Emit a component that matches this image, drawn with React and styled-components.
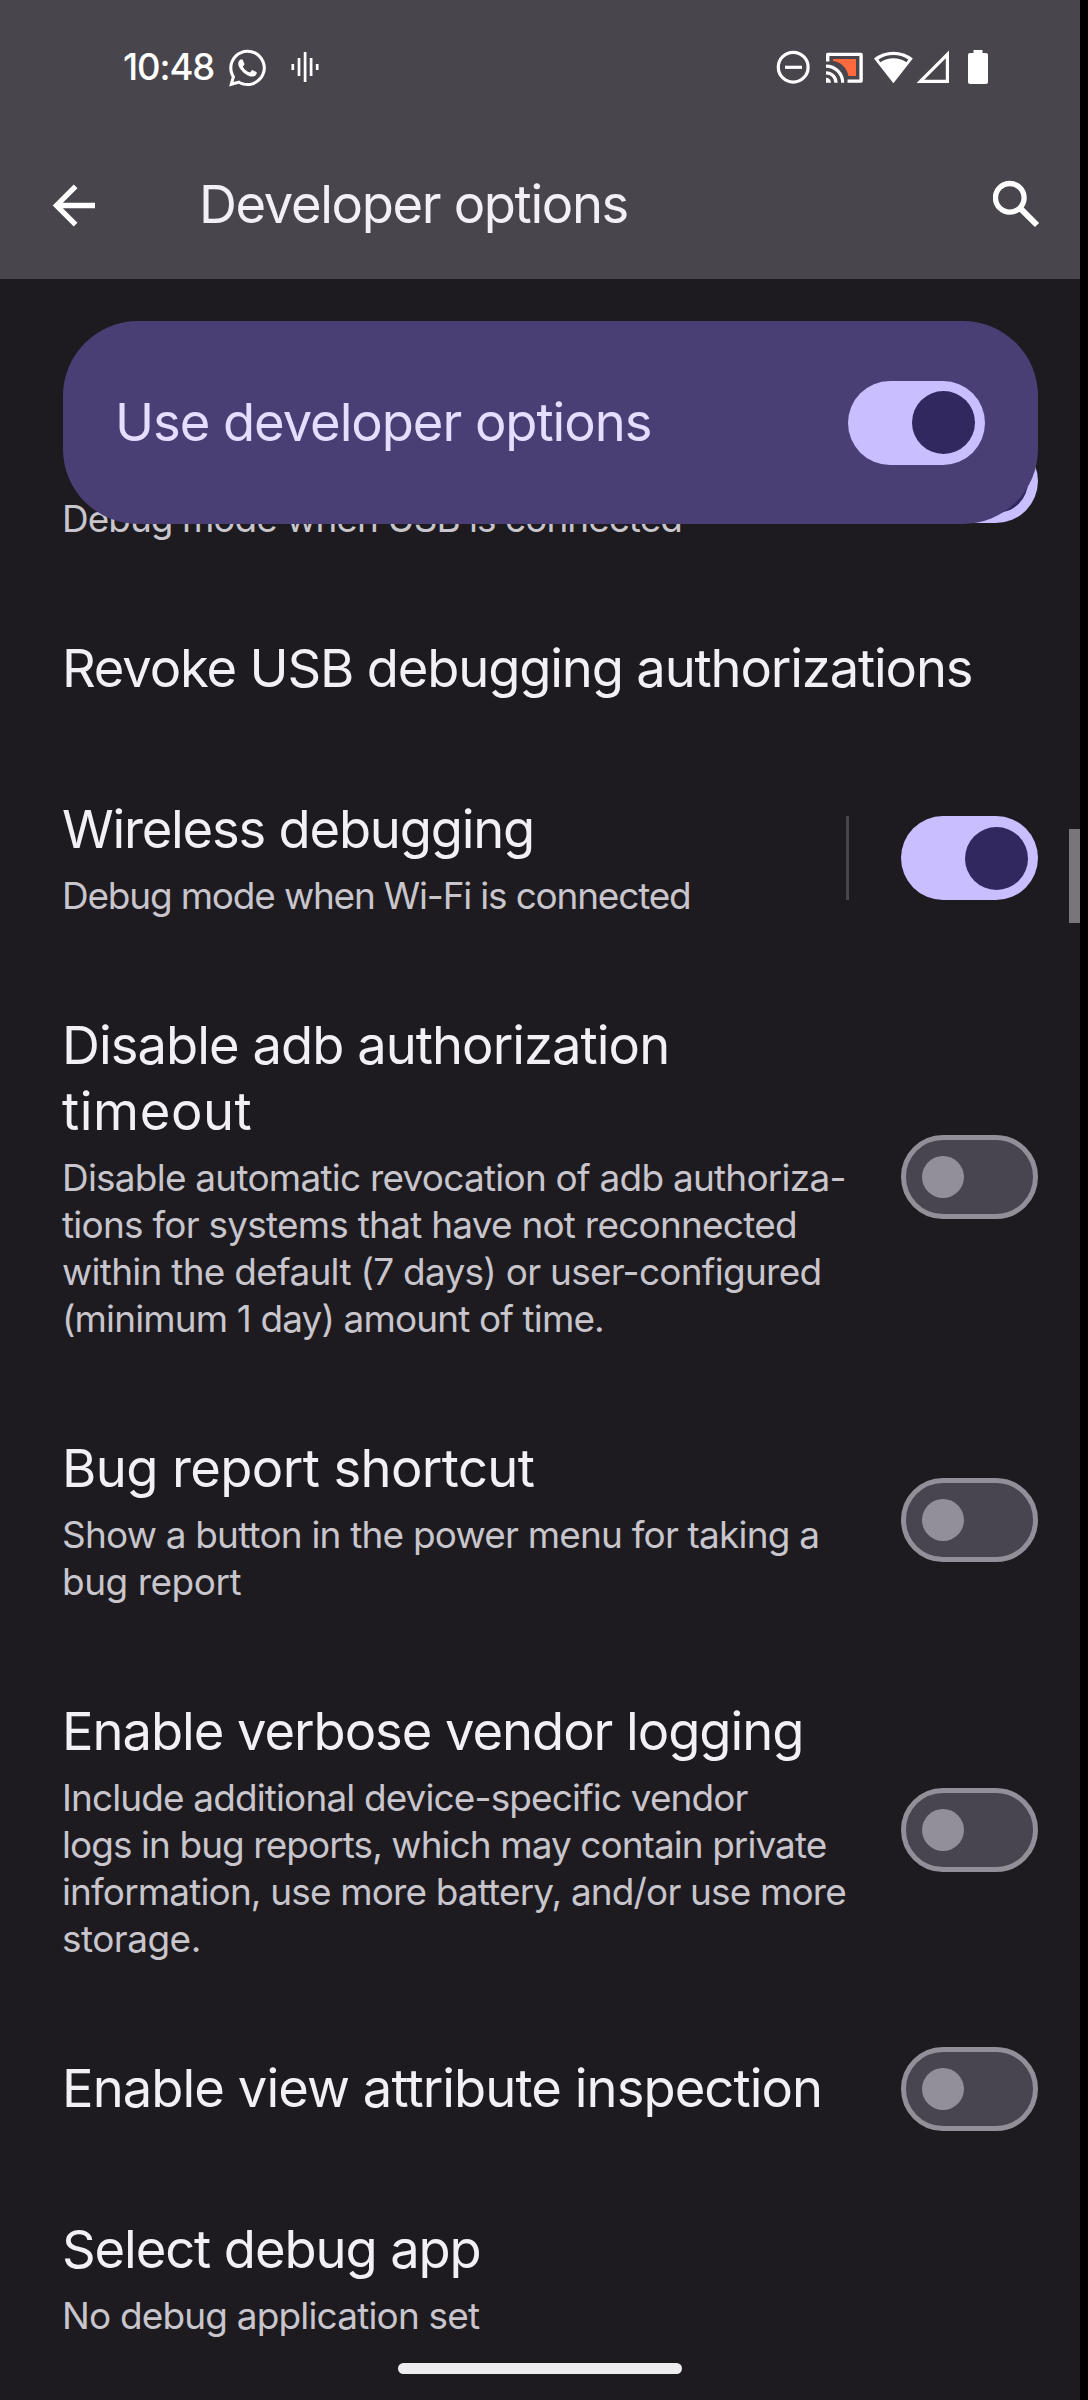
import React from 'react';
import styled, { createGlobalStyle } from 'styled-components';
import { FaWhatsapp } from 'react-icons/fa';

const color = {
  frame: '#000000',
  header: '#49454c',
  surface: '#1d1b20',
  card: '#4a3f75',
  cardText: '#e5deff',
  title: '#f3eff6',
  summary: '#c8c5cc',
  accent: '#c9beff',
  accentThumb: '#31285f',
  outline: '#928f99',
  track: '#48454e',
};

const GlobalStyle = createGlobalStyle`
  *, *::before, *::after { box-sizing: border-box; }
  body {
    margin: 0;
    background: ${color.frame};
    font-family: Inter, "Open Sans", sans-serif;
  }
`;

const Screen = styled.div`
  position: relative;
  display: flex;
  flex-direction: column;
  width: 1080px;
  height: 2400px;
  background: ${color.surface};
  overflow: hidden;
`;

const Header = styled.header`
  flex: none;
  height: 279px;
  background: ${color.header};
  color: #ffffff;
`;

const StatusBar = styled.div`
  display: flex;
  align-items: center;
  justify-content: space-between;
  height: 134px;
  padding: 0 91px 0 123px;
`;

const StatusGroup = styled.div`
  display: flex;
  align-items: center;
`;

const Clock = styled.time`
  width: 105px;
  font-size: 36.5px;
  font-weight: 500;
  line-height: 40px;
  letter-spacing: -1.1px;
`;

const StatusIcon = styled.svg`
  display: block;
  flex: none;
  margin-left: ${(p) => p.$gap || 0}px;
`;

const ChatIcon = styled(FaWhatsapp)`
  display: block;
  width: 37px;
  height: 42px;
  margin: 1px 0 0 1px;
`;

const AppBar = styled.div`
  display: flex;
  align-items: center;
  height: 145px;
  padding: 0 37px 5px 50px;
`;

const AppTitle = styled.h1`
  flex: 1;
  margin: 0 0 0 103px;
  font-size: 52.5px;
  font-weight: 400;
  line-height: 66px;
  letter-spacing: -1.34px;
  color: ${color.title};
`;

const Content = styled.main`
  position: relative;
  flex: 1;
  padding-top: 94px;
  overflow: hidden;
`;

const MasterCard = styled.section`
  position: absolute;
  top: 42px;
  left: 63px;
  right: 42px;
  z-index: 1;
  display: flex;
  align-items: center;
  justify-content: space-between;
  height: 203px;
  padding: 0 53px 0 52px;
  border-radius: 75px;
  background: ${color.card};
`;

const MasterLabel = styled.span`
  margin-top: -2px;
  font-size: 52.5px;
  line-height: 66px;
  letter-spacing: -1.04px;
  color: ${color.cardText};
`;

const Row = styled.div`
  display: flex;
  align-items: center;
  padding: 0 42px 0 62px;
  min-height: ${(p) => p.$minHeight || 161}px;
`;

const Texts = styled.div`
  flex: 1;
  align-self: flex-end;
  padding: 46px 0 ${(p) => (p.$titleOnly ? 49 : 47)}px;
  white-space: nowrap;
`;

const Title = styled.div`
  font-size: 52.5px;
  line-height: 66px;
  color: ${color.title};
`;

const Summary = styled.div`
  margin-top: 10px;
  font-size: 36.94px;
  line-height: 47px;
  color: ${color.summary};
`;

const Line = styled.span`
  display: block;
  letter-spacing: ${(p) => p.$tracking}px;
`;

const Divider = styled.div`
  width: 3px;
  height: 84px;
  margin-right: 52px;
  background: #47464a;
`;

const Track = styled.div`
  flex: none;
  display: flex;
  align-items: center;
  justify-content: ${(p) => (p.$on ? 'flex-end' : 'flex-start')};
  width: 137px;
  height: 84px;
  margin-bottom: ${(p) => (p.$on ? 0 : 1)}px;
  padding: 0 ${(p) => (p.$on ? 10.5 : 16)}px;
  border: ${(p) => (p.$on ? 'none' : `5px solid ${color.outline}`)};
  border-radius: 42px;
  background: ${(p) => (p.$on ? color.accent : color.track)};
`;

const Thumb = styled.div`
  width: ${(p) => (p.$on ? 63 : 42)}px;
  height: ${(p) => (p.$on ? 63 : 42)}px;
  border-radius: 50%;
  background: ${(p) => (p.$on ? color.accentThumb : color.outline)};
`;

const ScrollThumb = styled.div`
  position: absolute;
  top: 829px;
  right: 0;
  width: 11px;
  height: 94px;
  background: #79767b;
`;

const NavHandle = styled.div`
  position: absolute;
  left: 398px;
  bottom: 26px;
  width: 284px;
  height: 11px;
  border-radius: 6px;
  background: #ededef;
`;

function Switch({ on }) {
  return (
    <Track $on={on} role="switch" aria-checked={!!on}>
      <Thumb $on={on} />
    </Track>
  );
}

function Lines({ items }) {
  return items.map(([text, tracking]) => (
    <Line key={text} $tracking={tracking}>
      {text}
    </Line>
  ));
}

// Each line of text is paired with its letter spacing.
const settings = [
  {
    summary: [['Debug mode when USB is connected', -0.95]],
    control: 'on',
    minHeight: 216,
  },
  { title: [['Revoke USB debugging authorizations', -1.15]] },
  {
    title: [['Wireless debugging', -1.21]],
    summary: [['Debug mode when Wi-Fi is connected', -1.16]],
    control: 'on',
    divider: true,
  },
  {
    title: [
      ['Disable adb authorization', -0.95],
      ['timeout', 0.6],
    ],
    summary: [
      ['Disable automatic revocation of adb authoriza-', -0.74],
      ['tions for systems that have not reconnected', -0.74],
      ['within the default (7 days) or user-configured', -0.7],
      ['(minimum 1 day) amount of time.', -0.85],
    ],
    control: 'off',
  },
  {
    title: [['Bug report shortcut', -0.6]],
    summary: [
      ['Show a button in the power menu for taking a', -0.78],
      ['bug report', -0.45],
    ],
    control: 'off',
  },
  {
    title: [['Enable verbose vendor logging', -1.04]],
    summary: [
      ['Include additional device-specific vendor', -0.85],
      ['logs in bug reports, which may contain private', -0.91],
      ['information, use more battery, and/or use more', -0.83],
      ['storage.', -0.5],
    ],
    control: 'off',
  },
  { title: [['Enable view attribute inspection', -0.92]], control: 'off' },
  {
    title: [['Select debug app', -1.1]],
    summary: [['No debug application set', -0.8]],
  },
];

function Setting({ title, summary, control, divider, minHeight }) {
  return (
    <Row $minHeight={minHeight}>
      <Texts $titleOnly={!summary}>
        {title && (
          <Title>
            <Lines items={title} />
          </Title>
        )}
        {summary && (
          <Summary>
            <Lines items={summary} />
          </Summary>
        )}
      </Texts>
      {divider && <Divider />}
      {control && <Switch on={control === 'on'} />}
    </Row>
  );
}

function StatusIcons() {
  return (
    <StatusGroup>
      <StatusIcon width="34" height="36" viewBox="776 49 34 36" fill="none" stroke="#fff" strokeWidth="3.2">
        <circle cx="793.2" cy="67.2" r="14.9" />
        <path d="M785 67.3H802" />
      </StatusIcon>
      <StatusIcon $gap={15} width="39" height="36" viewBox="825 49 39 36" fill="none">
        <path d="M833 59H856V76H848.5C847 68 840.5 61.5 833 61Z" fill="#ff6a3d" />
        <path d="M827.7 61.5V54.4H861.1V81.1H847.5" stroke="#fff" strokeWidth="3.4" strokeLinejoin="round" />
        <path d="M826 77.8A5 5 0 0 1 831 82.8H826Z" fill="#fff" />
        <path d="M826 72.8A10 10 0 0 1 836 82.8M826 66.1A16.7 16.7 0 0 1 842.7 82.8" stroke="#fff" strokeWidth="3.2" />
      </StatusIcon>
      <StatusIcon $gap={9} width="41" height="36" viewBox="873 49 41 36" fill="none">
        <path d="M893.4 83.2L874 58.6A31.3 31.3 0 0 1 912.8 58.6Z" fill="#fff" />
        <path d="M879.4 60.8A25.5 25.5 0 0 1 907.4 60.8" stroke={color.header} strokeWidth="3.4" />
      </StatusIcon>
      <StatusIcon $gap={2} width="34" height="36" viewBox="916 49 34 36" fill="none">
        <path d="M920.4 81.3L947.4 54.4V81.3Z" stroke="#fff" strokeWidth="3.2" />
      </StatusIcon>
      <StatusIcon $gap={17} width="22" height="36" viewBox="967 49 22 36" fill="#fff">
        <rect x="968" y="53" width="20" height="31" rx="2" />
        <rect x="973.5" y="50" width="9" height="5" />
      </StatusIcon>
    </StatusGroup>
  );
}

export default function App() {
  return (
    <>
      <GlobalStyle />
      <Screen>
        <Header>
          <StatusBar>
            <StatusGroup>
              <Clock>10:48</Clock>
              <ChatIcon />
              <StatusIcon $gap={25} width="28" height="32" viewBox="291 52 28 32" stroke="#fff" strokeWidth="2.7">
                <path d="M292.8 65V71M299 59V77M305.1 53V83M311.1 59V77M317.2 65V71" />
              </StatusIcon>
            </StatusGroup>
            <StatusIcons />
          </StatusBar>
          <AppBar>
            <svg width="46" height="46" viewBox="50 181 46 46" fill="none" stroke="#fff" strokeWidth="5.3">
              <path d="M95 205.5H56M75.6 186.4L56.5 205.5L75.6 224.6" />
            </svg>
            <AppTitle>Developer options</AppTitle>
            <svg width="50" height="50" viewBox="993 179 50 50" fill="none" stroke="#fff" strokeWidth="5.3">
              <circle cx="1009.8" cy="197.8" r="14.3" />
              <path d="M1019.8 207.8L1037 225" strokeWidth="6" />
            </svg>
          </AppBar>
        </Header>
        <Content>
          <MasterCard>
            <MasterLabel>Use developer options</MasterLabel>
            <Switch on />
          </MasterCard>
          {settings.map((item) => (
            <Setting key={(item.title || item.summary)[0][0]} {...item} />
          ))}
        </Content>
        <ScrollThumb />
        <NavHandle />
      </Screen>
    </>
  );
}
